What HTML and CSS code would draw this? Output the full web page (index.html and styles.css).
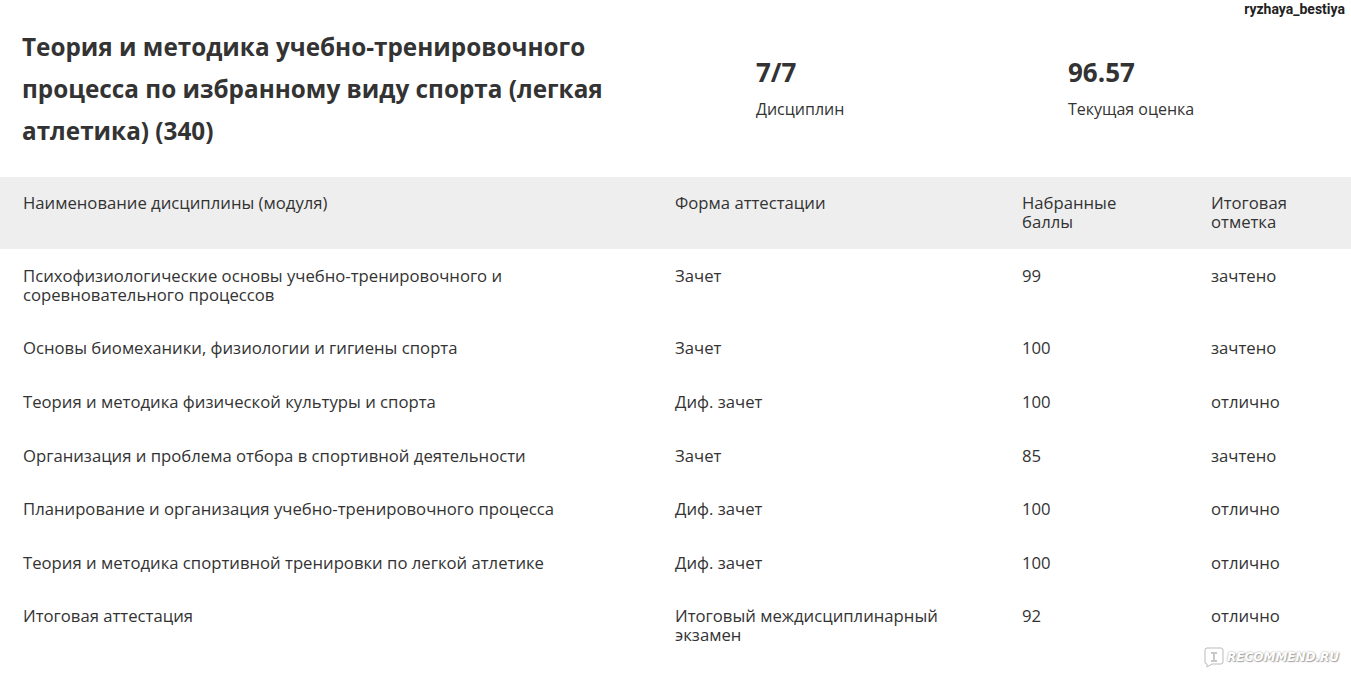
FILE: index.html
```html
<!DOCTYPE html>
<html lang="ru">
<head>
    <meta charset="UTF-8">
    <meta name="viewport" content="width=device-width, initial-scale=1.0">
    <title>Теория и методика учебно-тренировочного процесса</title>
    <link rel="stylesheet" href="styles.css">
</head>
<body>
    <div class="author">ryzhaya_bestiya</div>

    <div class="summary">
        <h1>Теория и методика учебно-тренировочного процесса по избранному виду спорта (легкая атлетика) (340)</h1>
        <div class="stat">
            <div class="stat-value">7/7</div>
            <div class="stat-label">Дисциплин</div>
        </div>
        <div class="stat">
            <div class="stat-value">96.57</div>
            <div class="stat-label">Текущая оценка</div>
        </div>
    </div>

    <table class="grades">
        <colgroup>
            <col class="col-name">
            <col class="col-form">
            <col class="col-score">
            <col class="col-mark">
        </colgroup>
        <thead>
            <tr>
                <th>Наименование дисциплины (модуля)</th>
                <th>Форма аттестации</th>
                <th>Набранные<br>баллы</th>
                <th>Итоговая<br>отметка</th>
            </tr>
        </thead>
        <tbody>
            <tr>
                <td>Психофизиологические основы учебно-тренировочного и<br>соревновательного процессов</td>
                <td>Зачет</td>
                <td>99</td>
                <td>зачтено</td>
            </tr>
            <tr>
                <td>Основы биомеханики, физиологии и гигиены спорта</td>
                <td>Зачет</td>
                <td>100</td>
                <td>зачтено</td>
            </tr>
            <tr>
                <td>Теория и методика физической культуры и спорта</td>
                <td>Диф. зачет</td>
                <td>100</td>
                <td>отлично</td>
            </tr>
            <tr>
                <td>Организация и проблема отбора в спортивной деятельности</td>
                <td>Зачет</td>
                <td>85</td>
                <td>зачтено</td>
            </tr>
            <tr>
                <td>Планирование и организация учебно-тренировочного процесса</td>
                <td>Диф. зачет</td>
                <td>100</td>
                <td>отлично</td>
            </tr>
            <tr>
                <td>Теория и методика спортивной тренировки по легкой атлетике</td>
                <td>Диф. зачет</td>
                <td>100</td>
                <td>отлично</td>
            </tr>
            <tr>
                <td>Итоговая аттестация</td>
                <td>Итоговый междисциплинарный<br>экзамен</td>
                <td>92</td>
                <td>отлично</td>
            </tr>
        </tbody>
    </table>

    <div class="watermark">
        <svg class="watermark-icon" width="22" height="22" viewBox="0 0 22 22">
            <path d="M4 2h14a2 2 0 0 1 2 2v12a2 2 0 0 1-2 2H9l-5 3v-3a2 2 0 0 1-2-2V4a2 2 0 0 1 2-2z" fill="#fff" stroke="#bbb" stroke-width="1"/>
            <path d="M8 6h6v2h-2v6h2v2H8v-2h2V8H8z" fill="#c8c8c8"/>
        </svg>
        <span>RECOMMEND.RU</span>
    </div>
</body>
</html>
```

FILE: styles.css
```css
body {
    margin: 0;
    font-family: 'Open Sans', 'Noto Sans', sans-serif;
    color: #333;
    background: #fff;
}
.author {
    position: absolute;
    top: 1px;
    right: 6px;
    font-family: Roboto, sans-serif;
    font-weight: 700;
    font-size: 14px;
    color: #222;
}
.summary {
    display: grid;
    grid-template-columns: 734px 312px 1fr;
    align-items: center;
    padding: 26px 0 25px 22px;
}
h1 {
    margin: 0;
    width: 610px;
    font-size: 24.3px;
    line-height: 42px;
    font-weight: 700;
    color: #333;
}
.stat-value {
    font-size: 26px;
    font-weight: 700;
    line-height: 32px;
    margin-top: -2px;
}
.stat-label {
    font-size: 16px;
    line-height: 22px;
    margin-top: 10px;
}
.grades {
    width: 100%;
    table-layout: fixed;
    border-collapse: collapse;
    font-size: 16.7px;
    line-height: 19px;
}
.grades th,
.grades td {
    text-align: left;
    vertical-align: top;
    padding: 16.8px 10px 17.8px 23px;
    font-weight: 400;
}
.grades th {
    padding-top: 16px;
    padding-bottom: 18px;
}
.grades thead tr {
    background: #eeeeee;
}
.col-name { width: 652px; }
.col-form { width: 347px; }
.col-score { width: 189px; }
.watermark {
    position: absolute;
    left: 1203px;
    top: 646px;
    display: flex;
    align-items: center;
    gap: 2px;
    font-family: 'DejaVu Sans', sans-serif;
    font-weight: 700;
    font-style: italic;
    font-size: 12px;
    color: #fff;
    text-shadow: 0 0 2px #999, 1px 1px 1px #aaa;
}
```
